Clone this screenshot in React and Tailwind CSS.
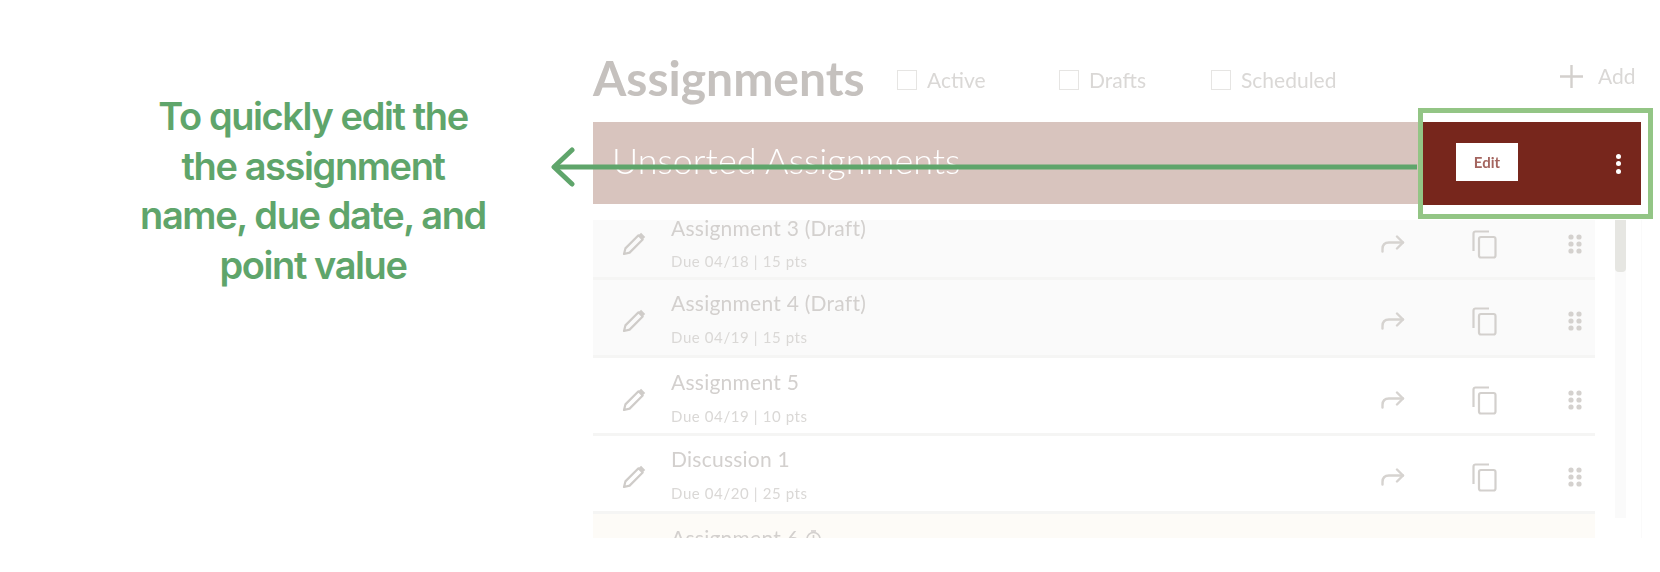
const rows = [
  { name: 'Assignment 3 (Draft)', meta: 'Due 04/18 | 15 pts', bg: 'bg-[#fafafa]', pad: 'pt-[11px]', textPad: 'pt-[2px]', metaGap: 'mt-[9px]' },
  { name: 'Assignment 4 (Draft)', meta: 'Due 04/19 | 15 pts', bg: 'bg-[#fafafa]', pad: 'pt-[10px]', textPad: '', metaGap: 'mt-[10px]' },
  { name: 'Assignment 5', meta: 'Due 04/19 | 10 pts', bg: 'bg-white', pad: 'pt-[11px]', textPad: '', metaGap: 'mt-[10px]' },
  { name: 'Discussion 1', meta: 'Due 04/20 | 25 pts', bg: 'bg-white', pad: 'pt-[10px]', textPad: '', metaGap: 'mt-[10px]' },
  { name: 'Assignment 6', meta: 'Due 04/21 | 20 pts', bg: 'bg-[#fdfbf7]', pad: 'pt-[11px]', textPad: '', metaGap: 'mt-[10px]', scheduled: true },
];

const filters = [
  { label: 'Active', width: 'w-[162px]' },
  { label: 'Drafts', width: 'w-[152px]' },
  { label: 'Scheduled', width: 'w-[349px]' },
];

const PencilIcon = () => (
  <svg width="24" height="24" viewBox="0 0 24 24" fill="none" stroke="#cfccc9" strokeWidth="2.2" strokeLinejoin="round" className="ml-[29px] shrink-0">
    <path d="M2 22l1.4-5.6L16.5 3.3l4.2 4.2L7.6 20.6z" />
    <path d="M18 1.8l4.2 4.2" strokeWidth="3" />
  </svg>
);

const ShareIcon = () => (
  <svg width="24" height="18" viewBox="0 0 24 18" fill="none" stroke="#d6d3d0" strokeWidth="2.4" strokeLinecap="round" strokeLinejoin="round">
    <path d="M1.5 16.5v-2.5c0-4.5 2.5-6.5 6.5-6.5h14" />
    <path d="M16 1.5l6 6-6 6" />
  </svg>
);

const CopyIcon = () => (
  <svg width="25" height="29" viewBox="0 0 25 29" fill="none" stroke="#d3d0cd" strokeWidth="2.2" strokeLinejoin="round">
    <path d="M1.5 21V3.5a2 2 0 0 1 2-2H17" />
    <rect x="7" y="7" width="16.5" height="20.5" rx="2" />
  </svg>
);

const DragIcon = () => (
  <svg width="14" height="20" viewBox="0 0 14 20" fill="#d4d1ce">
    {[3, 10, 17].map((cy) => (
      <g key={cy}>
        <circle cx="3" cy={cy} r="2.6" />
        <circle cx="11" cy={cy} r="2.6" />
      </g>
    ))}
  </svg>
);

const Row = ({ item }) => (
  <div className={`flex h-[78px] items-start border-b-[3px] border-[#f5f5f4] ${item.bg} ${item.pad}`}>
    <div className="flex h-[62px] w-[78px] items-center">
      <PencilIcon />
    </div>
    <div className={`w-[660px] ${item.textPad}`}>
      <div className="flex h-[26px] items-center gap-[6px] text-[21px] tracking-[0.25px] text-[#d3d0ce]">
        {item.name}
        {item.scheduled && (
          <svg width="17" height="17" viewBox="0 0 17 17" fill="none" stroke="#d3d0ce" strokeWidth="1.6">
            <circle cx="8.5" cy="9" r="6.5" />
            <path d="M8.5 5v4" />
            <path d="M6 1h5" />
          </svg>
        )}
      </div>
      <div className={`${item.metaGap} text-[15px] tracking-[0.6px] text-[#dad8d6]`}>{item.meta}</div>
    </div>
    <div className="flex h-[62px] w-[264px] items-center">
      <div className="ml-[50px] flex w-[91px]"><ShareIcon /></div>
      <div className="flex w-[96px]"><CopyIcon /></div>
      <DragIcon />
    </div>
  </div>
);

export default function App() {
  return (
    <div className="relative flex h-[572px] w-[1660px] overflow-hidden bg-white font-['Lato',sans-serif]">
      {/* Callout text */}
      <div className="w-[593px] shrink-0 pl-[113px] pt-[92px]">
        <p className="w-[400px] text-center font-['Inter',sans-serif] text-[38px] font-semibold leading-[49.7px] tracking-[-1.4px] text-[#5fa56b]">
          To quickly edit the
          <br />
          the assignment
          <br />
          name, due date, and
          <br />
          point value
        </p>
      </div>

      {/* Faded course builder */}
      <div className="w-[1067px] shrink-0 blur-[0.6px]">
        <div className="flex h-[122px] items-center pt-[38px]">
          <h1 className="-mt-[4px] w-[304px] text-[48px] font-bold leading-none text-[#c5c1be]">Assignments</h1>
          {filters.map((f) => (
            <label key={f.label} className={`flex items-center gap-[10px] ${f.width} text-[21px] text-[#dad8d6]`}>
              <span className="h-[20px] w-[20px] border border-[#e6e5e3]" />
              {f.label}
            </label>
          ))}
          <div className="-mt-[8px] flex items-center gap-[15px] text-[21px] text-[#dad8d6]">
            <svg width="23" height="23" viewBox="0 0 23 23" fill="none" stroke="#d3d0cd" strokeWidth="2.4">
              <path d="M11.5 0v23M0 11.5h23" />
            </svg>
            Add
          </div>
        </div>

        <div className="flex h-[82px] w-[1048px] items-start">
          <div className="flex h-[82px] flex-1 items-center bg-[#d8c4be] pb-[6px] pl-[19px] text-[36px] font-light text-white">
            Unsorted Assignments
          </div>
          <div className="flex h-[83px] w-[218px] items-center justify-between bg-[#77261c] pl-[33px] pr-[20px]">
            <button className="mb-[3px] h-[38px] w-[62px] bg-white text-[15px] font-bold text-[#a4655f]">Edit</button>
            <div className="flex flex-col gap-[2.5px]">
              <span className="h-[5px] w-[5px] rounded-full bg-white" />
              <span className="h-[5px] w-[5px] rounded-full bg-white" />
              <span className="h-[5px] w-[5px] rounded-full bg-white" />
            </div>
          </div>
        </div>

        <div className="mt-[16px] flex h-[318px] w-[1049px] overflow-hidden border-r border-[#fafafa]">
          <div className="w-[1002px] shrink-0">
            <div className="-mt-[18px]">
              {rows.map((item) => (
                <Row key={item.name} item={item} />
              ))}
            </div>
          </div>
          <div className="ml-[20px] h-[298px] w-[11px] bg-[#fafafa]">
            <div className="h-[52px] w-[11px] rounded-b-[4px] bg-[#e6e6e2]" />
          </div>
        </div>
      </div>

      {/* Highlight around the edit area */}
      <div className="absolute left-[1418px] top-[108px] h-[111px] w-[235px] border-[5px] border-[#93c585]" />

      {/* Arrow from highlight to callout */}
      <svg width="870" height="40" viewBox="0 0 870 40" fill="none" stroke="#5fa56b" strokeWidth="5" strokeLinecap="round" strokeLinejoin="round" className="absolute left-[551px] top-[147px]">
        <path d="M3 20H866" strokeLinecap="butt" />
        <path d="M21 3L3 20L21 37" />
      </svg>
    </div>
  );
}
